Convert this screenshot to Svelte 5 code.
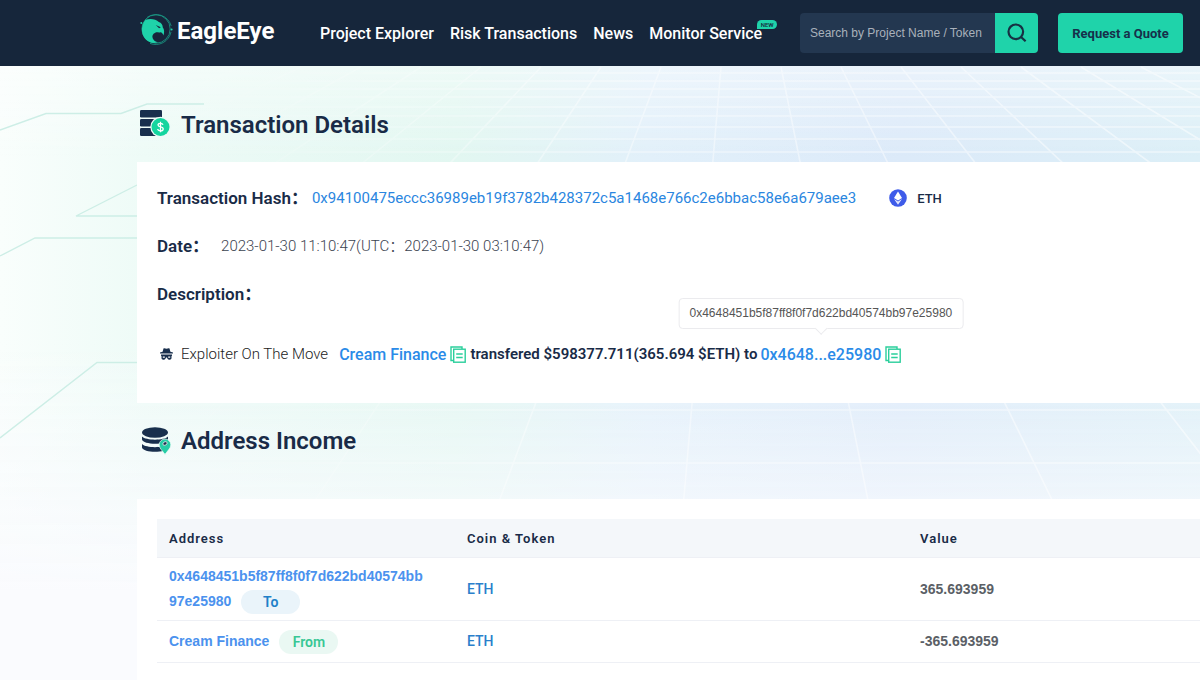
<script>
  const navItems = [
    { label: 'Project Explorer' },
    { label: 'Risk Transactions' },
    { label: 'News' },
    { label: 'Monitor Service', badge: 'NEW' }
  ];

  const hash = '0x94100475eccc36989eb19f3782b428372c5a1468e766c2e6bbac58e6a679aee3';
  const recipient = '0x4648451b5f87ff8f0f7d622bd40574bb97e25980';

  const rows = [
    { address: recipient, direction: 'To', coin: 'ETH', value: '365.693959' },
    { address: 'Cream Finance', direction: 'From', coin: 'ETH', value: '-365.693959' }
  ];

  // Perspective floor grid: rays spread from one vanishing point above the page.
  const vanish = { x: 739, y: -142 };
  const rays = Array.from({ length: 22 }, (_, i) => {
    const offset = (i - 10) * 60 - 18;
    return { x1: vanish.x + offset, x2: vanish.x + offset * 3.93 };
  });
  const levels = [73, 81, 89, 97, 107, 116, 127, 139, 152, 410, 463];
</script>

{#snippet copyIcon()}
  <svg width="16" height="17" viewBox="0 0 16 17" fill="none" stroke="#2bcf9c" stroke-width="1.4" aria-hidden="true">
    <path d="M3.5 14.5H1V1h11v2" />
    <rect x="3.7" y="3.2" width="11.5" height="13" />
    <path d="M6.2 8h6.5M6.2 11.5h6.5" />
  </svg>
{/snippet}

<div class="page">
  <header>
    <a class="brand" href="#home">
      <svg width="33" height="34" viewBox="0 0 33 34" aria-hidden="true">
        <circle cx="16" cy="17" r="14.2" fill="none" stroke="#1a9c87" stroke-width=".8" />
        <path d="M7 5.500A15.600 15.600 0 0 1 31.200 14M31 20A15.600 15.600 0 0 1 10 31.400" fill="none" stroke="#1a9c87" stroke-width=".8" />
        <circle cx="1.300" cy="11" r="1" fill="#1fd3aa" />
        <circle cx="31.600" cy="17.500" r="1" fill="#1fd3aa" />
        <path d="M5.500 7.800C10.500 6 16 7.200 18.800 10c2.600.8 3.800 2.600 4 5.400 1.500 1.700 1.800 4.600.6 8.200-.5-2.200-1.500-3.200-3-3.400-1.600.6-3.400-.3-5.200.5-2.600 1-3.400 3.600-2.400 5.800.8 2 2.700 3.300 5.200 3.700C10.500 33 3 27.500 2 19.200 1.600 14.800 3 10.500 5.500 7.800Z" fill="#1fd3aa" />
        <path d="M15.800 13l5 2.200-1.700 1Z" fill="#16263b" />
      </svg>
      <span>EagleEye</span>
    </a>
    <nav>
      {#each navItems as item}
        <a href="#nav">{item.label}{#if item.badge}<span class="badge">{item.badge}</span>{/if}</a>
      {/each}
    </nav>
    <form class="search">
      <input type="text" placeholder="Search by Project Name / Token" aria-label="Search by Project Name or Token" />
      <button type="button" aria-label="Search">
        <svg width="20" height="20" viewBox="0 0 20 20" fill="none" stroke="#173042" stroke-width="2.200" aria-hidden="true">
          <circle cx="8.800" cy="8.800" r="7.300" />
          <path d="M14 14l4.600 4.300" />
        </svg>
      </button>
    </form>
    <button type="button" class="quote">Request a Quote</button>
  </header>

  <main>
    <svg class="backdrop" width="1200" height="680" viewBox="0 0 1200 680" aria-hidden="true">
      <defs>
        <linearGradient id="fade" x1="0" y1="0" x2="1" y2="0">
          <stop offset="0" stop-color="#fff" stop-opacity="0" />
          <stop offset=".2" stop-color="#fff" stop-opacity=".1" />
          <stop offset=".45" stop-color="#fff" stop-opacity=".4" />
          <stop offset="1" stop-color="#fff" stop-opacity=".5" />
        </linearGradient>
        <mask id="floor">
          <rect width="1200" height="500" fill="url(#fade)" />
        </mask>
      </defs>
      <g mask="url(#floor)" stroke="#fff" stroke-width="1.600">
        {#each rays as ray}
          <line x1={ray.x1} y1="67" x2={ray.x2} y2="680" />
        {/each}
        {#each levels as y}
          <line x1="0" y1={y} x2="1200" y2={y} />
        {/each}
      </g>
      <g fill="none" stroke="#cdeee6" stroke-width="1.400">
        <path d="M0 130 46 113.500H121L147 104H204" />
        <path d="M137 185 76 216H137" />
        <path d="M0 256 35 238H137" />
        <path d="M0 438 97 362.500H137" />
      </g>
    </svg>

    <section>
      <h2>
        <svg width="31" height="30" viewBox="0 0 31 30" aria-hidden="true">
          <g fill="#192f4d">
            <rect width="22" height="7.500" rx="1.300" />
            <rect y="9" width="22" height="7.500" rx="1.300" />
            <rect y="18" width="22" height="8" rx="1.300" />
          </g>
          <circle cx="20.500" cy="17" r="10.200" fill="#ecfaf7" />
          <circle cx="20.500" cy="17" r="9" fill="#14d59f" />
          <path d="M23 14.800c-.3-1-1.200-1.500-2.500-1.500-1.500 0-2.500.7-2.500 1.800 0 2.700 5.200 1 5.200 3.800 0 1.200-1.200 1.900-2.700 1.900s-2.600-.6-2.800-1.800M20.500 11.800v10.400" fill="none" stroke="#fff" stroke-width="1.300" />
        </svg>
        Transaction Details
      </h2>
      <div class="card details">
        <div class="line">
          <span class="label">Transaction Hash：</span>
          <a class="hash" href="#tx">{hash}</a>
          <span class="chain">
            <svg width="18" height="18" viewBox="0 0 18 18" aria-hidden="true">
              <circle cx="9" cy="9" r="8.800" fill="#3e5be9" />
              <path d="M9 2.500 13 9l-4 2.400L5 9Z" fill="#fff" />
              <path d="M9 12.500l4-2.500-4 5.800L5 10Z" fill="#e3e8fd" />
            </svg>
            ETH
          </span>
        </div>
        <div class="line">
          <span class="label">Date：</span>
          <span class="date">2023-01-30 11:10:47(UTC：2023-01-30 03:10:47)</span>
        </div>
        <div class="line"><span class="label">Description：</span></div>
        <div class="line story">
          <svg width="13" height="12" viewBox="0 0 13 12" fill="#192f4d" aria-hidden="true">
            <path d="M2.600 3.800 3.500.5C4.300 0 5.600.7 6.500.7S8.700 0 9.500.5l.9 3.300 2.600.8v1H0v-1Z" />
            <path fill-rule="evenodd" d="M1 6.500h11v1.200l-.5.300v2c0 1-.8 1.700-1.800 1.700h-.6C8 11.700 7.300 10.700 7 9.500H6c-.3 1.200-1 2.200-2.100 2.200h-.6c-1 0-1.800-.7-1.800-1.700V8L1 7.700ZM2.800 8.400v1.300h2V8.400ZM8.200 8.400v1.300h2V8.400Z" />
          </svg>
          <span class="kind">Exploiter On The Move</span>
          <a class="party" href="#sender">Cream Finance</a>
          <button type="button" class="copy" aria-label="Copy sender">{@render copyIcon()}</button>
          <strong>transfered $598377.711(365.694 $ETH) to</strong>
          <span class="target">
            <a class="party" href="#recipient">0x4648...e25980</a>
            <span class="tooltip" role="tooltip">{recipient}</span>
          </span>
          <button type="button" class="copy" aria-label="Copy recipient">{@render copyIcon()}</button>
        </div>
      </div>
    </section>

    <section class="income">
      <h2>
        <svg width="31" height="28" viewBox="0 0 31 28" aria-hidden="true">
          <g fill="#192f4d">
            <ellipse cx="15" cy="5.500" rx="13" ry="5.200" />
            <path d="M2 9.500c4 4.200 22 4.200 26 0v3c-1 5.600-25 5.600-26 0Z" />
            <path d="M2 17c4 4.200 22 4.200 26 0v3.500c-1 5.700-25 5.700-26 0Z" />
          </g>
          <path d="M25 27.500c-1.800-3-5.800-6-5.800-9.700a5.800 5.800 0 0 1 11.600 0c0 3.700-4 6.700-5.800 9.700Z" fill="#26cda6" stroke="#ecfaf7" stroke-width=".7" />
          <ellipse cx="25" cy="16.500" rx="2.300" ry="1.600" transform="rotate(-30 25 16.500)" fill="#192f4d" stroke="#fff" stroke-width=".7" />
        </svg>
        Address Income
      </h2>
      <div class="card">
        <table>
          <colgroup><col class="c-address" /><col class="c-coin" /><col /></colgroup>
          <thead>
            <tr><th>Address</th><th>Coin &amp; Token</th><th>Value</th></tr>
          </thead>
          <tbody>
            {#each rows as row}
              <tr>
                <td class="address">
                  <a href="#address">{row.address}</a><span class="pill" class:from={row.direction === 'From'}>{row.direction}</span>
                </td>
                <td><a class="coin" href="#coin">{row.coin}</a></td>
                <td class="value">{row.value}</td>
              </tr>
            {/each}
          </tbody>
        </table>
      </div>
    </section>
  </main>
</div>

<style>
  :global(body) {
    margin: 0;
  }

  .page {
    min-height: 100vh;
    display: flex;
    flex-direction: column;
    overflow: hidden;
    position: relative;
    font-family: Roboto, 'Noto Sans CJK SC', sans-serif;
    color: #192b47;
  }

  a {
    text-decoration: none;
  }

  button {
    border: 0;
    padding: 0;
    font-family: inherit;
    cursor: pointer;
  }

  svg {
    flex: none;
    display: block;
  }

  header {
    box-sizing: border-box;
    height: 66px;
    padding: 0 17px 0 140px;
    background: #16263b;
    display: flex;
    align-items: center;
  }

  .brand {
    display: flex;
    align-items: center;
    gap: 4px;
    width: 180px;
    height: 58px;
    align-self: flex-start;
    color: #fff;
    font-size: 24px;
    font-weight: 700;
  }

  .brand span {
    padding-top: 4px;
  }

  nav {
    display: flex;
    gap: 16px;
    padding-top: 2px;
  }

  nav a {
    position: relative;
    color: #fff;
    font-size: 16px;
    font-weight: 500;
    line-height: 24px;
    white-space: nowrap;
  }

  .badge {
    position: absolute;
    left: calc(100% - 5px);
    top: -2px;
    width: 20px;
    height: 9px;
    border-radius: 5px 5px 5px 0;
    background: #1fd3aa;
    color: #16263b;
    font-size: 6px;
    line-height: 9px;
    text-align: center;
  }

  .search {
    display: flex;
    height: 40px;
    margin: 0 20px 0 auto;
    border-radius: 4px;
    overflow: hidden;
  }

  .search input {
    box-sizing: border-box;
    width: 195px;
    border: 0;
    padding: 0 10px;
    background: #233750;
    color: #fff;
    font: 12px 'Liberation Sans', Arial, sans-serif;
    outline: 0;
  }

  .search input::placeholder {
    color: #a9b1bb;
    opacity: 1;
  }

  .search button {
    width: 43px;
    display: grid;
    place-items: center;
    background: #1fd3aa;
  }

  .quote {
    width: 125px;
    height: 40px;
    border-radius: 4px;
    background: #1fd3aa;
    color: #16304a;
    font-size: 13px;
    font-weight: 700;
    white-space: nowrap;
  }

  main {
    flex: 1;
    padding-left: 137px;
    background:
      linear-gradient(to bottom, rgba(250, 251, 254, 0) 45%, rgba(250, 251, 254, 0.7) 72%, #fafbfe 85%),
      linear-gradient(to bottom, rgba(255, 255, 255, 0.4), rgba(255, 255, 255, 0) 90px),
      linear-gradient(to right, #f9fefc 0, #eefbf7 12%, #e2f7f1 38%, #e2f0fa 54%, #dceaf9 75%, #dceff7 100%);
  }

  .backdrop {
    position: absolute;
    left: 0;
    top: 0;
    pointer-events: none;
  }

  header,
  section {
    position: relative;
    z-index: 1;
  }

  h2 {
    display: flex;
    align-items: center;
    gap: 10px;
    height: 34px;
    margin: 0;
    padding: 42px 0 20px 3px;
    font-size: 24px;
    font-weight: 600;
    line-height: 34px;
  }

  .income h2 {
    padding: 21px 0 41px 3px;
  }

  .card {
    background: #fff;
    padding: 20px 0 20px 20px;
  }

  .details {
    padding-top: 12px;
    padding-bottom: 25px;
  }

  .line {
    display: flex;
    align-items: center;
    height: 48px;
    font-size: 15px;
    white-space: nowrap;
  }

  .label {
    margin-right: 4px;
    font-size: 17px;
    font-weight: 600;
    line-height: 24px;
  }

  .hash {
    color: #2a86e0;
  }

  .chain {
    display: flex;
    align-items: center;
    gap: 10px;
    margin-left: 33px;
    font-size: 13px;
    font-weight: 500;
  }

  .date {
    margin-left: 8px;
    font-weight: 300;
    line-height: 24px;
    color: #3b4350;
  }

  .story {
    margin-top: 12px;
    padding-left: 3px;
  }

  .kind {
    margin: 0 11px 0 8px;
    font-weight: 300;
    color: #222;
  }

  .party {
    color: #2a8be8;
    font-size: 16px;
    font-weight: 500;
  }

  .copy {
    margin: 0 4px;
    background: none;
  }

  strong {
    font-weight: 600;
    margin-right: 3px;
  }

  .target {
    position: relative;
  }

  .tooltip {
    position: absolute;
    left: 50%;
    bottom: calc(100% + 16px);
    transform: translateX(-50%);
    padding: 0 10px;
    border: 1px solid #ebebee;
    border-radius: 4px;
    background: #fff;
    color: #555;
    font: 12px/29px 'Liberation Sans', Arial, sans-serif;
  }

  .tooltip::after {
    content: '';
    position: absolute;
    left: calc(50% - 4px);
    bottom: -5px;
    width: 8px;
    height: 8px;
    background: #fff;
    border: solid #ebebee;
    border-width: 0 1px 1px 0;
    transform: rotate(45deg);
  }

  table {
    width: 100%;
    border-collapse: collapse;
    table-layout: fixed;
  }

  .c-address {
    width: 298px;
  }

  .c-coin {
    width: 453px;
  }

  th {
    height: 38px;
    padding: 0 12px;
    background: #f4f7fa;
    border-bottom: 1px solid #eef0f5;
    font-size: 13px;
    font-weight: 600;
    letter-spacing: 1px;
    text-align: left;
  }

  tbody tr {
    height: 42px;
  }

  td {
    padding: 6px 12px;
    border-bottom: 1px solid #eef0f5;
    font-size: 14px;
    line-height: 25px;
  }

  td.address {
    padding-right: 30px;
    font-family: 'Liberation Sans', Arial, sans-serif;
    font-weight: 700;
    word-break: break-all;
  }

  .address a {
    color: #4b92ee;
  }

  .coin {
    color: #2a7fcb;
    font-size: 14px;
    font-weight: 500;
  }

  .value {
    color: #5b5f66;
    font-family: 'Liberation Sans', Arial, sans-serif;
    font-weight: 700;
  }

  .pill {
    display: inline-block;
    width: 59px;
    margin-left: 10px;
    border-radius: 12px;
    background: #eaf4fa;
    color: #2080c8;
    font: 600 14px/24px Roboto, sans-serif;
    text-align: center;
    vertical-align: middle;
  }

  .pill.from {
    background: #eaf8f3;
    color: #38c795;
  }
</style>
